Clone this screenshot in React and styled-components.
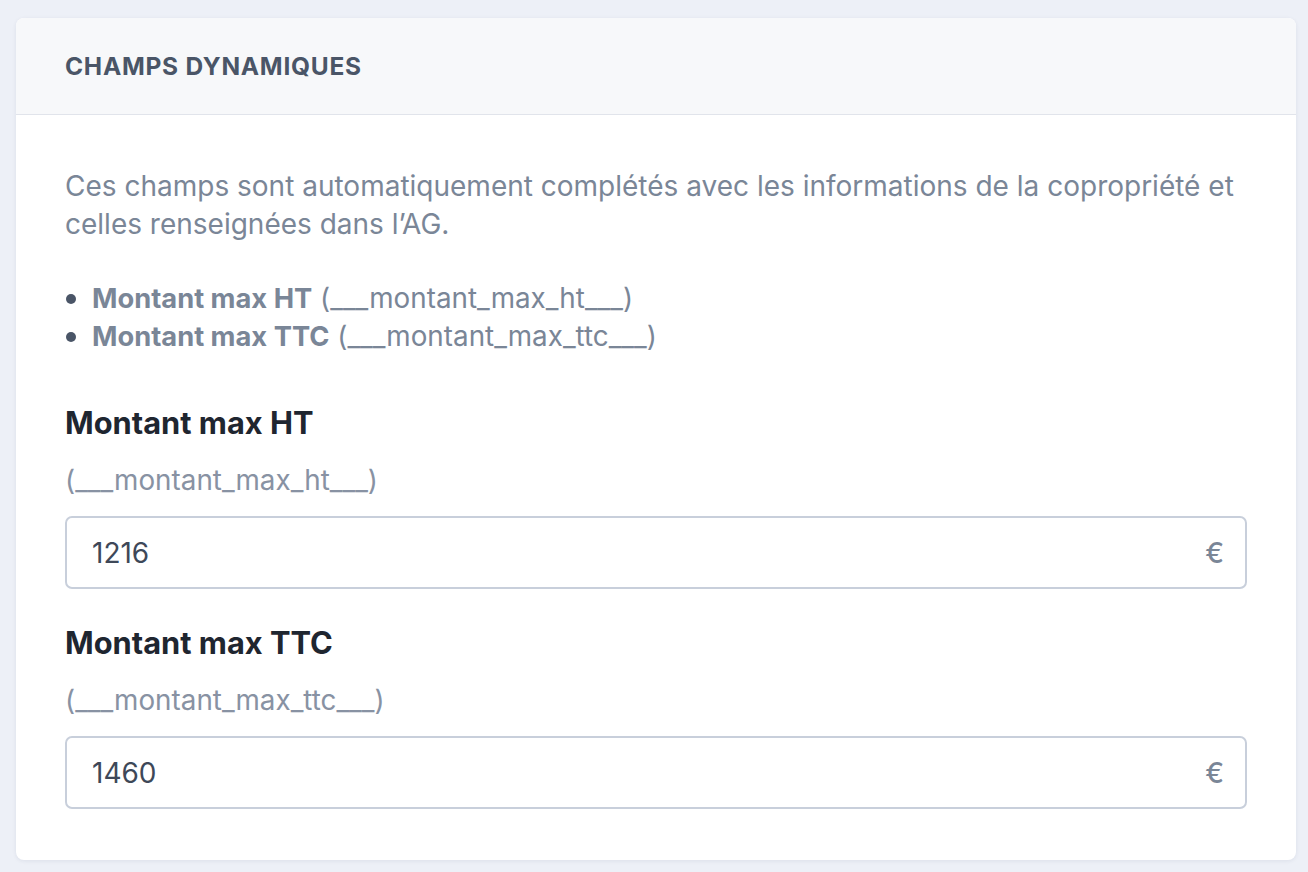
import React from 'react';
import styled, { createGlobalStyle } from 'styled-components';

const GlobalStyle = createGlobalStyle`
  html, body {
    margin: 0;
    padding: 0;
    background: #edf0f7;
    font-family: Inter, "Noto Sans", sans-serif;
  }
`;

const Page = styled.div`
  padding: 18px 12px 12px 16px;
`;

const Card = styled.section`
  background: #ffffff;
  border-radius: 8px;
  box-shadow: 0 1px 4px rgba(30, 41, 80, 0.08);
  overflow: hidden;
`;

const Header = styled.header`
  background: #f7f8fa;
  border-bottom: 1px solid #e1e4eb;
  height: 96px;
  display: flex;
  align-items: center;
  padding: 0 49px;
`;

const Title = styled.h2`
  margin: 0;
  font-size: 24.5px;
  font-weight: 700;
  letter-spacing: 0.03em;
  color: #4a5567;
  text-transform: uppercase;
`;

const Body = styled.div`
  padding: 52px 49px 51px;
`;

const Intro = styled.p`
  margin: 0;
  font-size: 28px;
  line-height: 38px;
  color: #7a8697;
`;

const VarList = styled.ul`
  margin: 35px 0 0;
  padding: 0 0 0 27px;
  font-size: 27.8px;
  line-height: 38px;
  color: #7a8697;

  li {
    height: 38px;
  }

  li::marker {
    color: #4a5567;
    font-size: 30px;
  }
`;

const VarName = styled.strong`
  font-size: 27.3px;
  line-height: 1;
  font-weight: 700;
`;

const Field = styled.div`
  margin-top: ${(p) => (p.$first ? '50px' : '35px')};
`;

const Label = styled.label`
  display: block;
  font-size: 30.8px;
  line-height: 38px;
  font-weight: 700;
  color: #1f2630;
`;

const Hint = styled.div`
  margin-top: 19px;
  font-size: 27.8px;
  line-height: 38px;
  color: #8892a3;
`;

const InputWrap = styled.div`
  margin-top: 17px;
  height: 73px;
  box-sizing: border-box;
  border: 2px solid #c8cfdb;
  border-radius: 7px;
  display: flex;
  align-items: center;
  padding: 0 21px 0 25px;
`;

const Input = styled.input`
  flex: 1;
  border: none;
  outline: none;
  background: transparent;
  font-family: inherit;
  font-size: 28px;
  color: #3e4858;
  padding: 0;
`;

const Suffix = styled.span`
  font-size: 28px;
  font-weight: 500;
  color: #7a8697;
`;

const fields = [
  { label: 'Montant max HT', key: '___montant_max_ht___', value: '1216' },
  { label: 'Montant max TTC', key: '___montant_max_ttc___', value: '1460' },
];

export default function App() {
  return (
    <>
      <GlobalStyle />
      <Page>
        <Card>
          <Header>
            <Title>Champs dynamiques</Title>
          </Header>
          <Body>
            <Intro>
              Ces champs sont automatiquement complétés avec les informations de la copropriété et
              celles renseignées dans l’AG.
            </Intro>
            <VarList>
              {fields.map((f) => (
                <li key={f.key}>
                  <VarName>{f.label}</VarName> ({f.key})
                </li>
              ))}
            </VarList>
            {fields.map((f, i) => (
              <Field key={f.key} $first={i === 0}>
                <Label>{f.label}</Label>
                <Hint>({f.key})</Hint>
                <InputWrap>
                  <Input defaultValue={f.value} />
                  <Suffix>€</Suffix>
                </InputWrap>
              </Field>
            ))}
          </Body>
        </Card>
      </Page>
    </>
  );
}
